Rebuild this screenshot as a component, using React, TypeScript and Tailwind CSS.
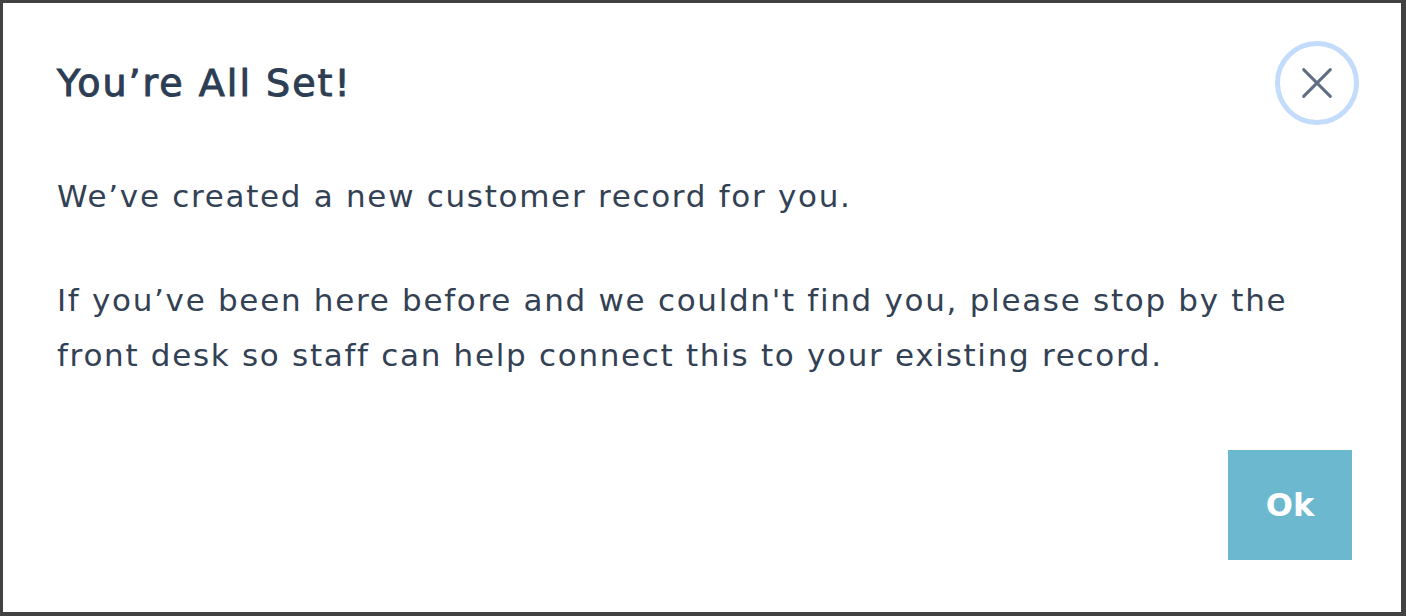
export default function App() {
  return (
    <div className="h-[616px] w-[1406px] bg-[#424242] pl-[3px] pt-[3px] pr-[5px] pb-[4px]">
      <div
        className="flex h-full flex-col bg-white pl-[54px] pr-[49px] text-[#334155]"
        style={{ fontFamily: '"DejaVu Sans", "Noto Sans", sans-serif' }}
      >
        <div className="flex items-center justify-between pt-[38px]">
          <h2 className="text-[38px] font-normal leading-none tracking-[2px] text-[#2d3e54] [-webkit-text-stroke-width:1px] [-webkit-text-stroke-color:#2d3e54]">
            You’re All Set!
          </h2>
          <button className="mr-[-7px] flex h-[84px] w-[84px] items-center justify-center rounded-full border-[5px] border-[#c3dcfb] text-[#5f6e83]">
            <svg width="40" height="40" viewBox="0 0 24 24" fill="none" stroke="currentColor" strokeWidth="1.8" strokeLinecap="round">
              <path d="M4 4l16 16M20 4 4 20" />
            </svg>
          </button>
        </div>
        <div className="mt-[44px] text-[31px] leading-[55px] tracking-[1.7px]">
          <p>We’ve created a new customer record for you.</p>
          <p className="mt-[49px]">
            If you’ve been here before and we couldn't find you, please stop by the
            <br />
            front desk so staff can help connect this to your existing record.
          </p>
        </div>
        <div className="mt-auto flex justify-end pb-[52px]">
          <button className="flex h-[110px] w-[124px] items-center justify-center bg-[#6bb8cf] text-[32px] font-bold text-white">
            Ok
          </button>
        </div>
      </div>
    </div>
  );
}
